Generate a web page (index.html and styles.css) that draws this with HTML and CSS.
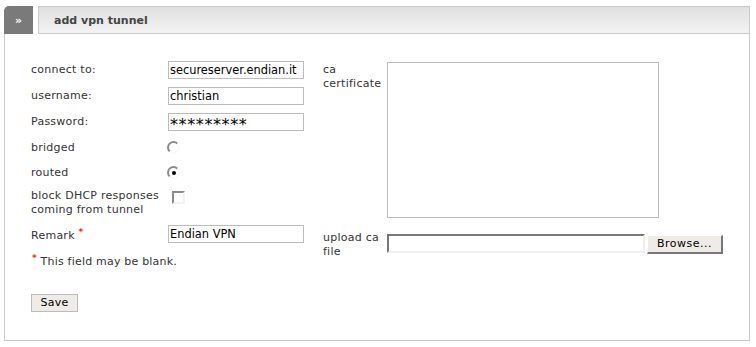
FILE: index.html
```html
<!DOCTYPE html>
<html>
<head>
<meta charset="utf-8">
<link rel="stylesheet" href="styles.css">
</head>
<body>
<div class="page">
  <div class="head">
    <div class="tab">&raquo;</div>
    <div class="bar">add vpn tunnel</div>
  </div>
  <div class="box">
    <div class="cols">
      <div class="left">
        <div class="row"><label class="lbl">connect to:</label><input class="txt" type="text" value="secureserver.endian.it"></div>
        <div class="row"><label class="lbl">username:</label><input class="txt" type="text" value="christian"></div>
        <div class="row"><label class="lbl">Password:</label><input class="txt pw" type="text" value="*********"></div>
        <div class="row r25"><label class="lbl">bridged</label><span class="radio"></span></div>
        <div class="row r25"><label class="lbl">routed</label><span class="radio on"></span></div>
        <div class="row dhcp"><label class="lbl">block DHCP responses coming from tunnel</label><span class="check"></span></div>
        <div class="row r25"><label class="lbl">Remark <span class="ast">*</span></label><input class="txt" type="text" value="Endian VPN"></div>
        <div class="note"><span class="ast">*</span> This field may be blank.</div>
      </div>
      <div class="right">
        <div class="rrow"><label class="rlbl">ca certificate</label><div class="area"></div></div>
        <div class="rrow up"><label class="rlbl">upload ca file</label><div class="file"><div class="fbox"></div><div class="browse">Browse...</div></div></div>
      </div>
    </div>
    <div class="save">Save</div>
  </div>
</div>
</body>
</html>
```
FILE: styles.css
```css
* { box-sizing: border-box; }
html, body { margin: 0; padding: 0; background: #fff; }
body { font-family: "DejaVu Sans", Verdana, sans-serif; font-size: 11px; color: #333; }
.page { padding: 6px 6px 0 4px; width: 756px; }
.head { display: flex; height: 28px; }
.tab { width: 29px; height: 28px; background: #7a7a7a; border-top-left-radius: 5px; color: #fff; font-weight: bold; font-size: 11px; display: flex; align-items: center; justify-content: center; padding-top: 1px; }
.bar { margin-left: 5px; flex: 1; height: 28px; border: 1px solid #cacaca; background: linear-gradient(#e0e0e0, #f3f3f3); font-weight: bold; color: #444; padding-left: 15px; line-height: 27px; }
.box { border: 1px solid #cacaca; border-top: none; height: 307px; padding: 23px 0 0 26px; }
.cols { display: flex; }
.left { width: 274px; }
.row { display: flex; align-items: center; height: 26px; }
.r25 { height: 25px; }
.lbl { width: 137px; line-height: 14px; letter-spacing: 0.25px; }
.txt { width: 136px; height: 18px; border: 1px solid #bcbcbc; padding: 0 1px; font-family: "DejaVu Sans", Verdana, sans-serif; font-size: 11.4px; color: #000; outline: none; }
.pw { letter-spacing: 0.6px; font-size: 16px; padding-top: 5px; line-height: 12px; }
.radio { width: 13px; height: 13px; border-radius: 50%; border: 2px solid #fafafa; border-top-color: #8a8a8a; border-left-color: #8a8a8a; background: #fff; position: relative; margin-left: -1px; }
.radio.on::after { content: ""; position: absolute; width: 4px; height: 4px; border-radius: 50%; background: #000; left: 2.5px; top: 2.5px; }
.dhcp { height: 36px; align-items: flex-start; padding-top: 4px; }
.check { width: 13px; height: 13px; border: 2px solid #f2f2f2; border-top-color: #8a8a8a; border-left-color: #8a8a8a; margin-left: 4px; margin-top: 2px; }
.ast { color: #e03a00; font-size: 9px; font-weight: bold; vertical-align: 4px; }
.note { margin-top: 5px; line-height: 14px; letter-spacing: 0.2px; }
.note .ast { margin-left: 1px; }
.right { margin-left: 18px; padding-top: 5px; }
.rrow { display: flex; align-items: flex-start; }
.rlbl { width: 64px; line-height: 14px; letter-spacing: 0.25px; padding-top: 1px; }
.area { width: 272px; height: 156px; border: 1px solid #bcbcbc; }
.up { margin-top: 16px; }
.up .rlbl { margin-top: -4px; }
.file { display: flex; }
.fbox { width: 258px; height: 19px; border: 2px solid #f0f0f0; border-top-color: #777; border-left-color: #777; }
.browse { width: 76px; height: 19px; margin-left: 2px; margin-top: 1px; background: #efece8; border: 1px solid #fff; border-right: 2px solid #777; border-bottom: 2px solid #777; font-size: 11px; color: #000; text-align: center; line-height: 15px; letter-spacing: 0.5px; }
.save { margin-top: 25px; width: 47px; height: 18px; background: #efebe7; border: 1px solid #bbb; color: #000; text-align: center; line-height: 16px; font-size: 11px; letter-spacing: 0.3px; }
```
